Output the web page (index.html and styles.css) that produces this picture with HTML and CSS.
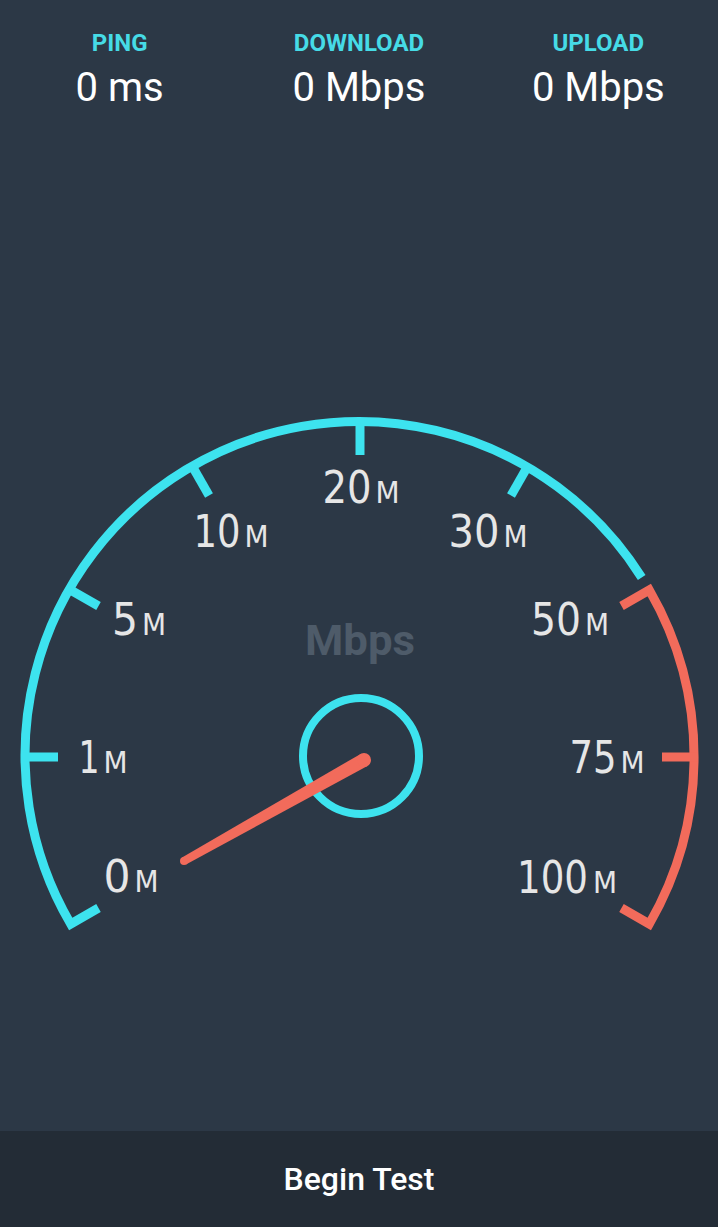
FILE: index.html
```html
<!DOCTYPE html>
<html>
<head>
<meta http-equiv="Content-Type" content="text/html; charset=utf-8"/>
<title>Speed Test</title>
<link rel="stylesheet" href="styles.css">
</head>
<body>
<div class="app">

  <div class="stats">
    <div class="stat">
      <div class="stat-label">PING</div>
      <div class="stat-value">0 ms</div>
    </div>
    <div class="stat">
      <div class="stat-label">DOWNLOAD</div>
      <div class="stat-value">0 Mbps</div>
    </div>
    <div class="stat">
      <div class="stat-label">UPLOAD</div>
      <div class="stat-value">0 Mbps</div>
    </div>
  </div>

  <!-- gauge: viewBox uses page coordinates, center 360,757 r 334 -->
  <svg class="gauge" width="718" height="1011" viewBox="0 120 718 1011">
    <path class="arc arc-low" d="M98.5 908 L70.7 924 A334 334 0 0 1 641.7 577.5"/>
    <path class="arc arc-high" d="M621.5 606 L649.3 590 A334 334 0 0 1 649.3 924 L621.5 908"/>

    <line class="tick tick-low" x1="22" y1="757" x2="58" y2="757"/>
    <line class="tick tick-low" x1="67" y1="588" x2="98.5" y2="606"/>
    <line class="tick tick-low" x1="191" y1="464" x2="209" y2="495.5"/>
    <line class="tick tick-low" x1="360" y1="419" x2="360" y2="455"/>
    <line class="tick tick-low" x1="529" y1="464" x2="511" y2="495.5"/>
    <line class="tick tick-high" x1="698" y1="757" x2="662" y2="757"/>

    <!-- scale labels: number ends just before the small "M" -->
    <g class="tick-label">
      <text class="num" x="130.5" y="892" textLength="27" lengthAdjust="spacingAndGlyphs">0</text>
      <text class="unit" x="134.5" y="892">M</text>
    </g>
    <g class="tick-label">
      <text class="num" x="99.5" y="773" textLength="21" lengthAdjust="spacingAndGlyphs">1</text>
      <text class="unit" x="103.5" y="773">M</text>
    </g>
    <g class="tick-label">
      <text class="num" x="138" y="635" textLength="26" lengthAdjust="spacingAndGlyphs">5</text>
      <text class="unit" x="142" y="635">M</text>
    </g>
    <g class="tick-label">
      <text class="num" x="240.5" y="547" textLength="47" lengthAdjust="spacingAndGlyphs">10</text>
      <text class="unit" x="244.5" y="547">M</text>
    </g>
    <g class="tick-label">
      <text class="num" x="371.5" y="503" textLength="49" lengthAdjust="spacingAndGlyphs">20</text>
      <text class="unit" x="375.5" y="503">M</text>
    </g>
    <g class="tick-label">
      <text class="num" x="499.5" y="547" textLength="51" lengthAdjust="spacingAndGlyphs">30</text>
      <text class="unit" x="503.5" y="547">M</text>
    </g>
    <g class="tick-label">
      <text class="num" x="581" y="635" textLength="50" lengthAdjust="spacingAndGlyphs">50</text>
      <text class="unit" x="585" y="635">M</text>
    </g>
    <g class="tick-label">
      <text class="num" x="616.5" y="773" textLength="47" lengthAdjust="spacingAndGlyphs">75</text>
      <text class="unit" x="620.5" y="773">M</text>
    </g>
    <g class="tick-label">
      <text class="num" x="588" y="893" textLength="71" lengthAdjust="spacingAndGlyphs">100</text>
      <text class="unit" x="593" y="893">M</text>
    </g>

    <text class="unit-label" x="360" y="655" textLength="110" lengthAdjust="spacingAndGlyphs">Mbps</text>

    <circle class="hub" cx="361" cy="756" r="58"/>

    <g class="needle">
      <polygon points="367.4,766.1 360.6,753.9 182,857.5 186,864.5"/>
      <circle cx="364" cy="760" r="7"/>
      <circle cx="184" cy="861" r="4"/>
    </g>
  </svg>

  <div class="start">Begin Test</div>

</div>
</body>
</html>
```

FILE: styles.css
```css
body {
  margin: 0;
  background-color: #2c3846;
  font-family: Roboto, "Liberation Sans", sans-serif;
}

.app {
  display: flex;
  flex-direction: column;
  width: 718px;
  height: 1227px;
}

.stats {
  display: grid;
  grid-template-columns: repeat(3, 1fr);
  height: 120px;
  padding-top: 28px;
  box-sizing: border-box;
  text-align: center;
}

.stat-label {
  color: #46dbe6;
  font-weight: 700;
  font-size: 24px;
  line-height: 30px;
}

.stat-value {
  margin-top: 8px;
  color: #ffffff;
  font-size: 40px;
  line-height: 44px;
}

.gauge {
  display: block;
  flex: 1;
}

.arc, .tick {
  fill: none;
  stroke-width: 9;
  stroke-linejoin: miter;
}

.arc-low, .tick-low, .hub {
  stroke: #3de3ef;
}

.arc-high, .tick-high {
  stroke: #f26b5b;
}

.hub {
  fill: none;
  stroke-width: 8;
}

.tick-label {
  fill: #e6e6e6;
  font-family: "Liberation Sans Narrow", "DejaVu Sans Condensed", sans-serif;
}

.tick-label .num {
  font-size: 44px;
  text-anchor: end;
}

.tick-label .unit {
  font-size: 31px;
  text-anchor: start;
}

.unit-label {
  fill: #4e5b69;
  font-family: Roboto, sans-serif;
  font-weight: 700;
  font-size: 42px;
  text-anchor: middle;
}

.needle {
  fill: #f26b5b;
}

.start {
  height: 96px;
  flex: none;
  display: flex;
  align-items: center;
  justify-content: center;
  background-color: #232c36;
  color: #ffffff;
  font-weight: 500;
  font-size: 32px;
}
```
